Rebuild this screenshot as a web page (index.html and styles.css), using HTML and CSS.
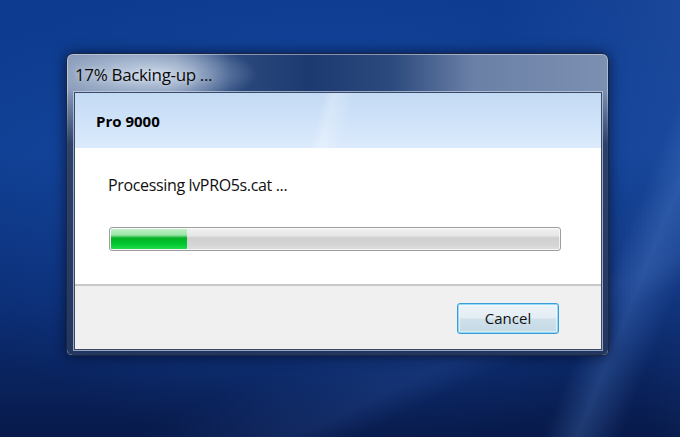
FILE: index.html
```html
<!DOCTYPE html>
<html>
<head>
<meta charset="utf-8">
<link rel="stylesheet" href="styles.css">
</head>
<body>
<div class="desktop">
  <div class="window">
    <div class="titlebar"><span class="title">17% Backing-up ...</span></div>
    <div class="client">
      <div class="header"><span class="app">Pro 9000</span></div>
      <div class="content">
        <div class="status">Processing lvPRO5s.cat ...</div>
        <div class="progress"><div class="fill" style="width:17%"></div></div>
      </div>
      <div class="footer"><button class="btn">Cancel</button></div>
    </div>
  </div>
</div>
</body>
</html>
```
FILE: styles.css
```css
html, body {
  margin: 0;
  padding: 0;
  width: 680px;
  height: 437px;
  overflow: hidden;
}
.desktop {
  width: 680px;
  height: 437px;
  overflow: hidden;
  box-sizing: border-box;
  padding: 53px 0 0 66px;
  background:
    linear-gradient(112deg, rgba(90,140,215,0) 84%, rgba(90,140,215,0.28) 88%, rgba(90,140,215,0) 93%),
    linear-gradient(250deg, rgba(70,110,190,0.25) 0%, rgba(70,110,190,0) 22%),
    linear-gradient(-25deg, rgba(60,100,180,0) 20%, rgba(60,100,180,0.18) 24%, rgba(60,100,180,0) 34%),
    radial-gradient(ellipse 420px 260px at 330px 190px, rgba(30,80,170,0.5), rgba(30,80,170,0) 100%),
    linear-gradient(180deg, #0c3a8e 0%, #0f3f93 35%, #0b2d74 70%, #081a4a 100%);
  font-family: "Open Sans", "Noto Sans", sans-serif;
}
.window {
  position: relative;
  width: 543px;
  height: 303px;
  box-sizing: border-box;
  border: 1px solid #1b2740;
  border-radius: 7px 7px 6px 6px;
  padding: 0 6px 5px 7px;
  display: flex;
  flex-direction: column;
  background:
    radial-gradient(ellipse 105px 32px at 85px 20px, rgba(205,218,235,0.95), rgba(205,218,235,0) 100%),
    linear-gradient(90deg, #8799b8 0%, #6e84a8 20%, #2c4a7e 30%, #1d3a70 45%, #2c4a7e 60%, #6a80a6 75%, #7c90b2 100%);
  box-shadow: inset 0 0 0 1px rgba(220,230,245,0.5), 0 0 14px rgba(0,0,20,0.6);
}
.window::after {
  content: "";
  position: absolute;
  left: 0; right: 0; bottom: 0;
  height: 264px;
  border-radius: 0 0 6px 6px;
  background: linear-gradient(180deg, rgba(40,60,100,0) 0%, rgba(30,50,95,0.85) 20%, #22365f 100%);
  z-index: 0;
}
.titlebar {
  height: 38px;
  display: flex;
  align-items: center;
  padding-left: 1px;
  position: relative;
  z-index: 1;
}
.title {
  font-size: 17px;
  color: #0a0a0a;
  letter-spacing: -0.35px;
  margin-top: 2px;
  text-shadow: 0 0 6px rgba(255,255,255,0.7);
}
.client {
  position: relative;
  z-index: 1;
  flex: 1;
  display: flex;
  flex-direction: column;
  border: 1px solid #3a4a66;
  box-shadow: 0 0 0 1px rgba(200,212,230,0.7);
  background: #fff;
}
.header {
  height: 55px;
  display: flex;
  align-items: center;
  padding-left: 21px;
  background:
    linear-gradient(105deg, rgba(255,255,255,0) 46%, rgba(255,255,255,0.25) 48%, rgba(255,255,255,0) 52%),
    linear-gradient(180deg, #c3daf4 0%, #d1e4f9 60%, #dcebfc 100%);
}
.app {
  font-weight: 700;
  font-size: 15px;
  color: #000;
  margin-top: 1px;
}
.content {
  flex: 1;
  padding: 26px 40px 0 33px;
  display: flex;
  flex-direction: column;
  border-bottom: 2px solid #c8c8c8;
}
.status {
  font-size: 16px;
  color: #111;
  letter-spacing: -0.35px;
  height: 22px;
  line-height: 22px;
}
.progress {
  margin-top: 31px;
  margin-left: 1px;
  width: 452px;
  height: 24px;
  box-sizing: border-box;
  border: 1px solid #9d9d9d;
  border-radius: 3px;
  background: linear-gradient(180deg, #f2f2f2 0%, #e6e6e6 35%, #cfcfcf 45%, #d6d6d6 80%, #e0e0e0 100%);
  box-shadow: inset 0 0 0 1px rgba(255,255,255,0.7);
  overflow: hidden;
  padding: 1px;
}
.fill {
  height: 100%;
  background: linear-gradient(180deg, #bff0c7 0%, #9be6a8 30%, #06b025 45%, #00c830 75%, #21dd4b 100%);
  border-radius: 1px;
}
.footer {
  height: 63px;
  background: #f0f0f0;
  display: flex;
  align-items: center;
  justify-content: flex-end;
  padding-right: 42px;
}
.btn {
  width: 102px;
  height: 31px;
  margin-top: 1px;
  border: 1px solid #3c9ed8;
  border-radius: 3px;
  background: linear-gradient(180deg, #eef4f8 0%, #e3edf3 48%, #cfe0ea 52%, #c4d9e6 100%);
  box-shadow: inset 0 0 0 1px rgba(120,210,250,0.8), inset 0 0 0 2px rgba(255,255,255,0.5);
  font-family: "Open Sans", "Noto Sans", sans-serif;
  font-size: 15px;
  color: #111;
  padding: 0;
}
```
